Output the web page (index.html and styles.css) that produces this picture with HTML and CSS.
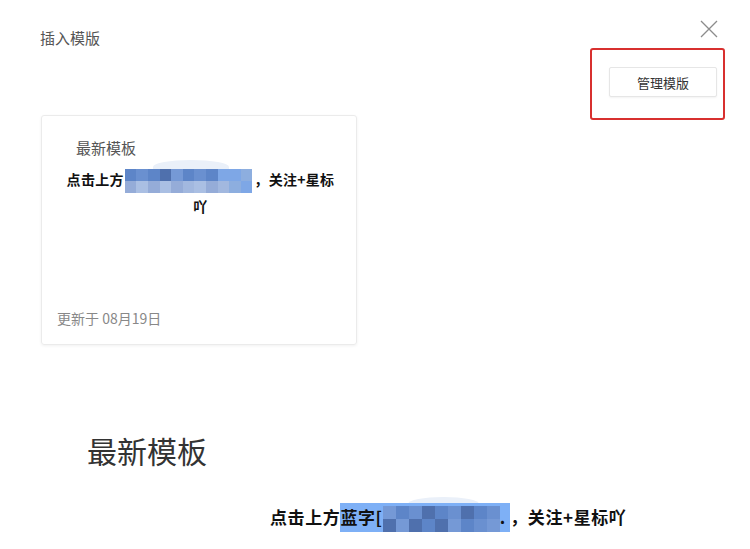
FILE: index.html
```html
<!DOCTYPE html>
<html lang="zh-CN">
<head>
    <meta charset="UTF-8">
    <meta name="viewport" content="width=device-width, initial-scale=1.0">
    <title>插入模版</title>
    <link rel="stylesheet" href="styles.css">
</head>
<body>
    <section class="dialog">
        <div class="head">
            <h2 class="title">插入模版</h2>
            <button class="close" aria-label="关闭">
                <svg width="18" height="18" viewBox="0 0 18 18">
                    <path d="M1 1 L17 17 M17 1 L1 17" stroke="#8c8c8c" stroke-width="1.3" fill="none"/>
                </svg>
            </button>
        </div>

        <div class="actions">
            <button class="manage-button">管理模版<span class="mark"></span></button>
        </div>

        <!-- Tarjeta de plantilla -->
        <div class="card">
            <p class="card-title">最新模板</p>
            <p class="card-text">点击上方<span class="mosaic small"><i class="c2"></i><i class="c1"></i><i class="c2"></i><i class="c4"></i><i class="c3"></i><i class="c2"></i><i class="c1"></i><i class="c2"></i><i class="c5"></i><i class="c5"></i><i class="c6"></i><i class="c8"></i><i class="c9"></i><i class="c8"></i><i class="c9"></i><i class="c8"></i><i class="c7"></i><i class="c9"></i><i class="c8"></i><i class="c7"></i><i class="c6"></i><i class="c5"></i></span>，关注+星标<br>吖</p>
            <p class="card-date">更新于 08月19日</p>
        </div>

        <div class="preview">
            <h1 class="preview-title">最新模板</h1>
            <p class="preview-text">点击上方<span class="hl">蓝字[<span class="mosaic big"><i class="c3"></i><i class="c2"></i><i class="c1"></i><i class="c4"></i><i class="c2"></i><i class="c1"></i><i class="c4"></i><i class="c2"></i><i class="c1"></i><i class="c4"></i><i class="c3"></i><i class="c4"></i><i class="c2"></i><i class="c4"></i><i class="c3"></i><i class="c2"></i><i class="c1"></i><i class="c3"></i></span>.&nbsp;</span>，关注+星标吖</p>
        </div>
    </section>
</body>
</html>
```

FILE: styles.css
```css
body {
    font-family: "Noto Sans CJK SC", "Noto Sans", sans-serif;
    margin: 0;
    padding: 0;
    background-color: #fff;
    color: #333;
}

.dialog {
    width: 750px;
    height: 549px;
    overflow: hidden;
}

.head {
    display: flex;
    justify-content: space-between;
    align-items: flex-start;
    height: 48px;
}

.title {
    margin: 29px 0 0 40px;
    font-size: 15px;
    line-height: 18px;
    font-weight: normal;
    color: #555;
}

.close {
    margin: 20px 32px 0 0;
    padding: 0;
    border: none;
    background: none;
    width: 18px;
    height: 18px;
}

.actions {
    display: flex;
    justify-content: flex-end;
    padding-right: 33px;
    margin-top: 19px;
}

.manage-button {
    position: relative;
    width: 108px;
    height: 30px;
    background: #fff;
    border: 1px solid #e6e6e6;
    border-radius: 2px;
    box-shadow: 0 1px 2px rgba(0, 0, 0, 0.05);
    font-family: inherit;
    font-size: 13px;
    color: #333;
    padding: 0;
}

/* recuadro rojo de la captura */
.mark {
    position: absolute;
    left: -20px;
    top: -20px;
    right: -9px;
    bottom: -24px;
    border: 2px solid #d8302f;
    border-radius: 3px;
}

.card {
    margin: 18px 0 0 41px;
    width: 316px;
    height: 230px;
    box-sizing: border-box;
    border: 1px solid #ebebeb;
    border-radius: 3px;
    box-shadow: 0 1px 3px rgba(0, 0, 0, 0.06);
    padding: 22px 12px 17px 15px;
    display: flex;
    flex-direction: column;
}

.card p {
    margin: 0;
}

.card-title {
    padding-left: 19px;
    font-size: 15px;
    line-height: 20px;
    color: #555;
}

.card-text {
    margin-top: 8px !important;
    font-size: 14px;
    line-height: 26px;
    font-weight: bold;
    color: #111;
    text-align: center;
    letter-spacing: 0.3px;
}

.card-date {
    margin-top: auto !important;
    font-size: 14px;
    line-height: 18px;
    color: #888;
}

.mosaic {
    display: inline-grid;
    vertical-align: middle;
    position: relative;
}

.mosaic::before {
    content: "";
    position: absolute;
    left: 22%;
    right: 18%;
    top: -9px;
    height: 14px;
    border-radius: 50% 50% 0 0;
    background: #eaf0f9;
    z-index: -1;
}

.mosaic.small {
    grid-template-columns: repeat(11, 11.6px);
    grid-template-rows: 12px 12px;
    margin: 0 2px 0 1px;
    background: #6fa3ee;
}

.mosaic.big {
    grid-template-columns: repeat(9, 13px);
    grid-template-rows: 13px 13px;
}

.mosaic i {
    display: block;
}

.c1 { background: #6a90d0; }
.c2 { background: #5d85c8; }
.c3 { background: #7599d6; }
.c4 { background: #4f70ad; }
.c5 { background: #7ea7e6; }
.c6 { background: #8daedf; }
.c7 { background: #a2b8df; }
.c8 { background: #95acd8; }
.c9 { background: #aabfe3; }

.preview {
    margin-top: 85px;
}

.preview-title {
    margin: 0 0 0 87px;
    font-size: 30px;
    line-height: 40px;
    font-weight: normal;
    color: #333;
}

.preview-text {
    margin: 33px 0 0;
    padding-left: 270px;
    font-size: 17px;
    line-height: 28px;
    font-weight: bold;
    color: #111;
    letter-spacing: 0.6px;
}

.hl {
    background: #7eb0f6;
    display: inline-block;
    line-height: 28px;
}
```
